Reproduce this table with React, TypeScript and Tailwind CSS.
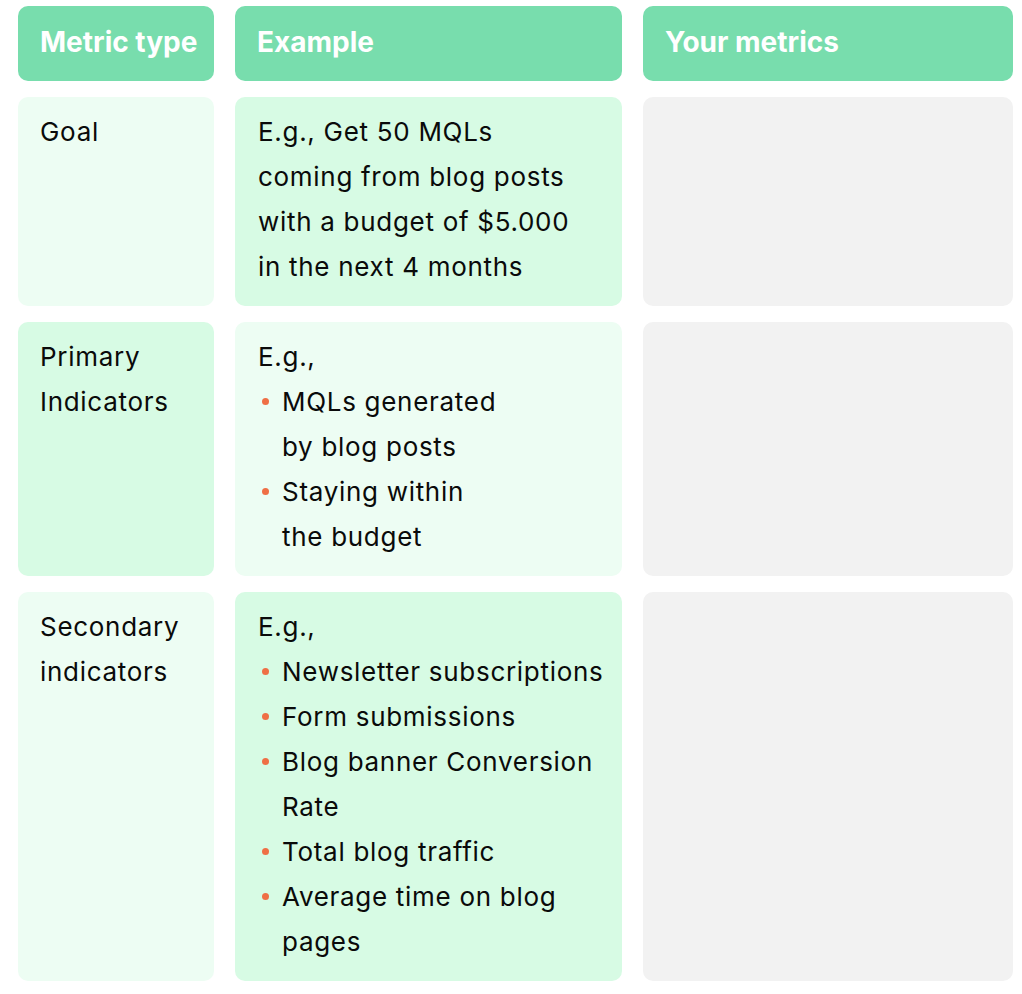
const font = { fontFamily: 'Inter, "Noto Sans", sans-serif' }

function Bullets({ items }: { items: React.ReactNode[] }) {
  return (
    <ul>
      {items.map((it, i) => (
        <li key={i} className="flex">
          <span className="mt-[19px] mr-[13px] ml-[4px] size-[7px] shrink-0 rounded-full bg-[#ef6f45]" />
          <span>{it}</span>
        </li>
      ))}
    </ul>
  )
}

const head = 'flex h-[75px] items-center whitespace-nowrap rounded-[10px] bg-[#78ddad] px-[22px] pb-[3px] text-[28px] font-bold text-white'
const cell = 'rounded-[10px] pt-[12px] pb-[17px] px-[22px] text-[26px] tracking-[0.027em] leading-[45px] text-[#0a0a0a]'

export default function App() {
  return (
    <div className="min-h-[994px] bg-white pt-[6px] pl-[18px]" style={font}>
      <div className="grid grid-cols-[196px_387px_370px] gap-x-[21px] gap-y-[16px]">
        <div className={head}>Metric type</div>
        <div className={head}>Example</div>
        <div className={head}>Your metrics</div>

        <div className={cell + ' bg-[#edfdf3]'}>Goal</div>
        <div className={cell + ' bg-[#d7fbe4] pl-[23px]'}>
          E.g., Get 50 MQLs
          <br />
          coming from blog posts
          <br />
          with a budget of $5.000
          <br />
          in the next 4 months
        </div>
        <div className="rounded-[10px] bg-[#f2f2f2]" />

        <div className={cell + ' bg-[#d7fbe4]'}>
          Primary
          <br />
          Indicators
        </div>
        <div className={cell + ' bg-[#edfdf3] pl-[23px]'}>
          E.g.,
          <Bullets
            items={[
              <>
                MQLs generated
                <br />
                by blog posts
              </>,
              <>
                Staying within
                <br />
                the budget
              </>,
            ]}
          />
        </div>
        <div className="rounded-[10px] bg-[#f2f2f2]" />

        <div className={cell + ' bg-[#edfdf3]'}>
          Secondary
          <br />
          indicators
        </div>
        <div className={cell + ' bg-[#d7fbe4] pl-[23px] pr-[10px]'}>
          E.g.,
          <Bullets
            items={[
              'Newsletter subscriptions',
              'Form submissions',
              'Blog banner Conversion Rate',
              'Total blog traffic',
              'Average time on blog pages',
            ]}
          />
        </div>
        <div className="rounded-[10px] bg-[#f2f2f2]" />
      </div>
    </div>
  )
}
